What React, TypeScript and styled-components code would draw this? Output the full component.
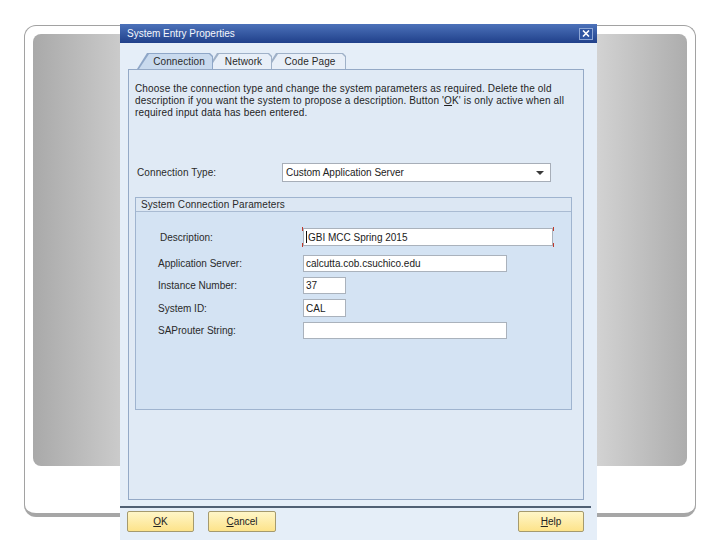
import React from 'react';
import styled, { createGlobalStyle } from 'styled-components';

const GlobalStyle = createGlobalStyle`
  html, body {
    margin: 0;
    padding: 0;
    background: #fff;
  }
  body {
    font-family: "Liberation Sans", Arial, sans-serif;
    font-size: 10px;
    color: #1c1c1c;
  }
`;

const fields = [
  { label: 'Description:', value: 'GBI MCC Spring 2015', width: 250, height: 18, focused: true },
  { label: 'Application Server:', value: 'calcutta.cob.csuchico.edu', width: 204, height: 17 },
  { label: 'Instance Number:', value: '37', width: 43, height: 17 },
  { label: 'System ID:', value: 'CAL', width: 43, height: 18 },
  { label: 'SAProuter String:', value: '', width: 204, height: 17 },
];

const App = () => {
  return (
    <Page>
      <GlobalStyle />
      <SlideFrame>
        <SlideImage />
      </SlideFrame>

      <Dialog>
        <TitleBar>
          <span>System Entry Properties</span>
          <CloseButton>
            <svg width="8" height="7" viewBox="0 0 8 7">
              <path d="M1 0.5 L7 6.5 M7 0.5 L1 6.5" stroke="#fff" strokeWidth="1.6" />
            </svg>
          </CloseButton>
        </TitleBar>

        <Body>
          <Tabs>
            <Tab $active $w={76} $z={3}>
              <TabLabel>Connection</TabLabel>
            </Tab>
            <Tab $w={65} $z={2}>
              <TabLabel>Network</TabLabel>
            </Tab>
            <Tab $w={80} $z={1}>
              <TabLabel>Code Page</TabLabel>
            </Tab>
          </Tabs>

          <Panel>
            <Intro>
              Choose the connection type and change the system parameters as required. Delete the old
              <br />
              description if you want the system to propose a description. Button '<u>O</u>K' is only active when all
              <br />
              required input data has been entered.
            </Intro>

            <ConnRow>
              <ConnLabel>Connection Type:</ConnLabel>
              <Select>
                <span>Custom Application Server</span>
                <Arrow />
              </Select>
            </ConnRow>

            <GroupBox>
              <GroupHeader>System Connection Parameters</GroupHeader>
              <Fields>
                {fields.map((f) => (
                  <FieldRow key={f.label} $extra={f.focused ? 4 : 0}>
                    <FieldLabel $indent={f.focused ? 2 : 0}>{f.label}</FieldLabel>
                    <InputBox $w={f.width} $h={f.height} $focused={f.focused}>
                      {f.focused && <Caret />}
                      {f.value}
                    </InputBox>
                  </FieldRow>
                ))}
              </Fields>
            </GroupBox>
          </Panel>
        </Body>

        <Separator />

        <Footer>
          <Button $w={67}>
            <u>O</u>K
          </Button>
          <Button $w={68}>
            <u>C</u>ancel
          </Button>
          <Button $w={66} $right>
            <u>H</u>elp
          </Button>
        </Footer>
      </Dialog>
    </Page>
  );
};

const Page = styled.div`
  position: relative;
  width: 720px;
  height: 540px;
  overflow: hidden;
  box-sizing: border-box;
  padding: 25px 0 0 24px;
`;

const SlideFrame = styled.div`
  width: 672px;
  height: 492px;
  box-sizing: border-box;
  border: 1px solid #a2a2a2;
  border-bottom: 4px solid #a6a6a6;
  border-radius: 12px;
  padding: 8px;
  background: #fff;
`;

const SlideImage = styled.div`
  height: 432px;
  border-radius: 8px;
  background: linear-gradient(
    90deg,
    #a9a9a9 0%,
    #cfcfcf 15%,
    #dadada 50%,
    #d3d3d3 86%,
    #adadad 100%
  );
`;

const Dialog = styled.div`
  position: absolute;
  left: 120px;
  top: 24px;
  width: 477px;
  height: 516px;
  background: #e5eef8;
  display: flex;
  flex-direction: column;
`;

const TitleBar = styled.div`
  height: 19px;
  flex-shrink: 0;
  background: linear-gradient(#4c72ba, #20408a);
  color: #f4f7fc;
  display: flex;
  align-items: center;
  justify-content: space-between;
  padding: 0 4px 0 7px;
  font-size: 10px;
`;

const CloseButton = styled.div`
  width: 12px;
  height: 10px;
  border: 1px solid #8ea7d6;
  background: #2f55a2;
  display: flex;
  align-items: center;
  justify-content: center;
`;

const Body = styled.div`
  padding: 10px 13px 0 8px;
`;

const Tabs = styled.div`
  display: flex;
  height: 16px;
  padding-left: 9px;
`;

const Tab = styled.div<{ $active?: boolean; $w: number; $z: number }>`
  position: relative;
  width: ${(p) => p.$w}px;
  height: 16px;
  margin-right: -6px;
  z-index: ${(p) => p.$z};
  display: flex;
  align-items: center;
  justify-content: center;
  padding-left: 8px;
  box-sizing: border-box;

  &::before,
  &::after {
    content: '';
    position: absolute;
    clip-path: polygon(0 100%, 10px 0, calc(100% - 3px) 0, 100% 3px, 100% 100%);
  }
  &::before {
    inset: 0;
    background: ${(p) => (p.$active ? '#8ea6c7' : '#9fb1c8')};
  }
  &::after {
    inset: 1px 1px 0 2px;
    background: ${(p) => (p.$active ? '#c9daee' : '#e8eff8')};
  }
`;

const TabLabel = styled.span`
  position: relative;
  z-index: 1;
  color: #2a2a2a;
  letter-spacing: 0.1px;
`;

const Panel = styled.div`
  height: 431px;
  box-sizing: border-box;
  border: 1px solid #94a9c6;
  background: #e0eaf5;
  padding: 13px 6px 0 6px;
`;

const Intro = styled.div`
  line-height: 12px;
  white-space: nowrap;
  letter-spacing: 0.15px;
  color: #1e1e1e;
`;

const ConnRow = styled.div`
  margin-top: 44px;
  display: flex;
  align-items: center;
  height: 19px;
`;

const ConnLabel = styled.div`
  width: 145px;
  padding-left: 2px;
  color: #2a2a2a;
  letter-spacing: 0.1px;
`;

const Select = styled.div`
  width: 269px;
  height: 19px;
  box-sizing: border-box;
  border: 1px solid #a7aeb8;
  background: #fff;
  padding: 0 6px 0 3px;
  display: flex;
  align-items: center;
  justify-content: space-between;
  color: #222;
`;

const Arrow = styled.div`
  width: 0;
  height: 0;
  border-left: 4px solid transparent;
  border-right: 4px solid transparent;
  border-top: 4px solid #3a3a3a;
`;

const GroupBox = styled.div`
  margin-top: 15px;
  width: 437px;
  height: 213px;
  box-sizing: border-box;
  border: 1px solid #9fb4cf;
  background: #d4e3f3;
`;

const GroupHeader = styled.div`
  height: 13px;
  line-height: 13px;
  border-bottom: 1px solid #a9bbd2;
  background: #dce7f3;
  padding-left: 5px;
  color: #2a2a2a;
  letter-spacing: 0.1px;
`;

const Fields = styled.div`
  padding: 16px 0 0 22px;
  display: flex;
  flex-direction: column;
  gap: 5px;
`;

const FieldRow = styled.div<{ $extra: number }>`
  display: flex;
  align-items: center;
  margin-bottom: ${(p) => p.$extra}px;
`;

const FieldLabel = styled.div<{ $indent: number }>`
  width: 145px;
  box-sizing: border-box;
  padding-left: ${(p) => p.$indent}px;
  color: #2a2a2a;
`;

const InputBox = styled.div<{ $w: number; $h: number; $focused?: boolean }>`
  position: relative;
  width: ${(p) => p.$w}px;
  height: ${(p) => p.$h}px;
  box-sizing: border-box;
  border: 1px solid #aab2bc;
  background: #fff;
  padding-left: 2px;
  display: flex;
  align-items: center;
  color: #1a1a1a;

  ${(p) =>
    p.$focused &&
    `
    &::before, &::after {
      content: '';
      position: absolute;
      top: -2px;
      bottom: -2px;
      width: 1px;
      background: linear-gradient(#c0392b 0 4px, transparent 4px calc(100% - 4px), #c0392b calc(100% - 4px));
    }
    &::before { left: -2px; }
    &::after { right: -2px; }
  `}
`;

const Caret = styled.span`
  width: 1px;
  height: 12px;
  background: #111;
  margin-right: 1px;
`;

const Separator = styled.div`
  margin: 6px 6px 0 0;
  height: 2px;
  background: #506074;
`;

const Footer = styled.div`
  margin-top: 3px;
  display: flex;
  gap: 14px;
  padding: 0 13px 0 7px;
`;

const Button = styled.div<{ $w: number; $right?: boolean }>`
  width: ${(p) => p.$w}px;
  height: 21px;
  box-sizing: border-box;
  margin-left: ${(p) => (p.$right ? 'auto' : '0')};
  border: 1px solid #a59a6e;
  border-radius: 2px;
  background: linear-gradient(#fff6c8, #fde38a);
  display: flex;
  align-items: center;
  justify-content: center;
  color: #222;
`;

export default App;
